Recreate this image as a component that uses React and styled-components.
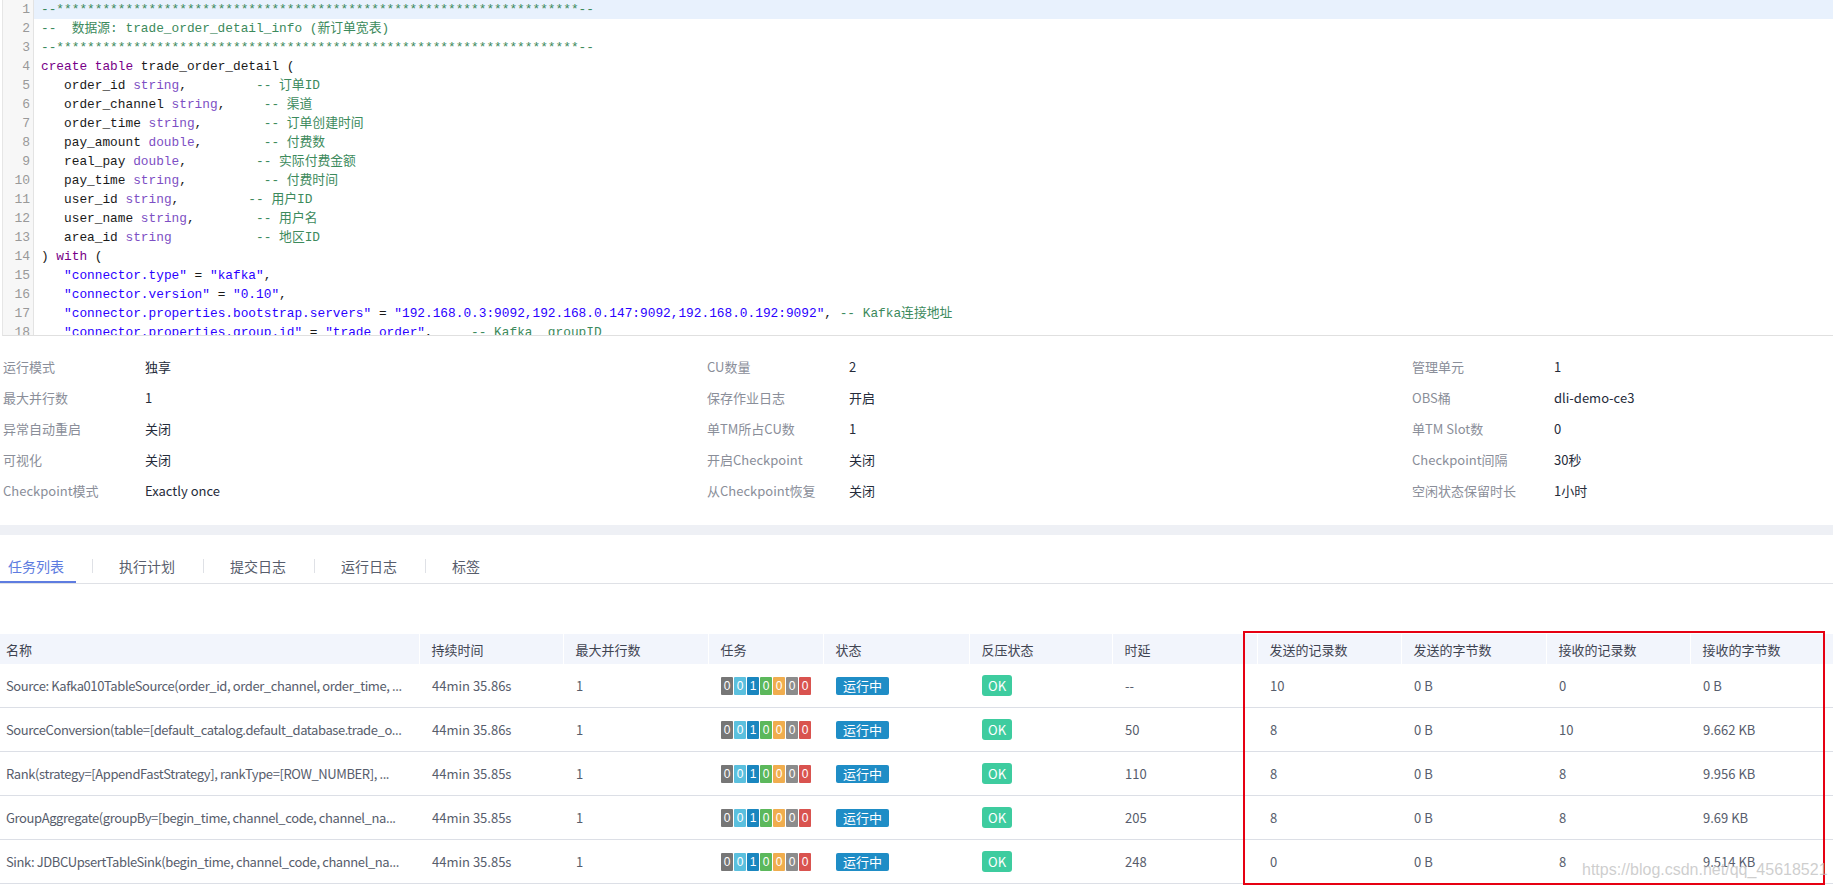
import React from "react"
import styled, { createGlobalStyle } from "styled-components"

const GlobalStyle = createGlobalStyle`
  body {
    margin: 0;
    background: #fff;
    font-family: "Noto Sans CJK SC", "Liberation Sans", sans-serif;
    overflow: hidden;
  }
`

const Page = styled.div`
  position: relative;
  width: 1833px;
  height: 888px;
  overflow: hidden;
`

/* ---------- code editor ---------- */

const Editor = styled.div`
  display: flex;
  height: 335px;
  margin-left: 2px;
  border-left: 1px solid #e6e6e6;
  border-bottom: 1px solid #e0e0e0;
  overflow: hidden;
  font-family: "Liberation Mono", "Noto Sans CJK SC", monospace;
  font-size: 12.8px;
`

const Gutter = styled.div`
  width: 30px;
  flex-shrink: 0;
  background: #f7f7f7;
  border-right: 1px solid #e3e3e3;
`

const LineNo = styled.div`
  height: 19px;
  line-height: 19px;
  padding-right: 3px;
  text-align: right;
  color: #999;
  font-size: 13px;
`

const CodeArea = styled.div`
  flex: 1;
`

const CodeLine = styled.div`
  height: 19px;
  line-height: 19px;
  padding-left: 7px;
  white-space: pre;
  color: #1a1a1a;
  background: ${({ $active }) => ($active ? "#e8f1fd" : "transparent")};
`

const tokenColors = {
  k: "#770088",
  y: "#7d4fc4",
  s: "#2a00ff",
  c: "#3c8a5c",
  p: "#1a1a1a",
}

const Tok = styled.span`
  color: ${({ $t }) => tokenColors[$t]};
`

const stars = "--" + "*".repeat(68) + "--"

const code = [
  [["c", stars]],
  [["c", "--  数据源: trade_order_detail_info (新订单宽表)"]],
  [["c", stars]],
  [["k", "create"], ["p", " "], ["k", "table"], ["p", " trade_order_detail ("]],
  [["p", "   order_id "], ["y", "string"], ["p", ",         "], ["c", "-- 订单ID"]],
  [["p", "   order_channel "], ["y", "string"], ["p", ",     "], ["c", "-- 渠道"]],
  [["p", "   order_time "], ["y", "string"], ["p", ",        "], ["c", "-- 订单创建时间"]],
  [["p", "   pay_amount "], ["y", "double"], ["p", ",        "], ["c", "-- 付费数"]],
  [["p", "   real_pay "], ["y", "double"], ["p", ",         "], ["c", "-- 实际付费金额"]],
  [["p", "   pay_time "], ["y", "string"], ["p", ",          "], ["c", "-- 付费时间"]],
  [["p", "   user_id "], ["y", "string"], ["p", ",         "], ["c", "-- 用户ID"]],
  [["p", "   user_name "], ["y", "string"], ["p", ",        "], ["c", "-- 用户名"]],
  [["p", "   area_id "], ["y", "string"], ["p", "           "], ["c", "-- 地区ID"]],
  [["p", ") "], ["k", "with"], ["p", " ("]],
  [["p", "   "], ["s", '"connector.type"'], ["p", " = "], ["s", '"kafka"'], ["p", ","]],
  [["p", "   "], ["s", '"connector.version"'], ["p", " = "], ["s", '"0.10"'], ["p", ","]],
  [
    ["p", "   "],
    ["s", '"connector.properties.bootstrap.servers"'],
    ["p", " = "],
    ["s", '"192.168.0.3:9092,192.168.0.147:9092,192.168.0.192:9092"'],
    ["p", ", "],
    ["c", "-- Kafka连接地址"],
  ],
  [
    ["p", "   "],
    ["s", '"connector.properties.group.id"'],
    ["p", " = "],
    ["s", '"trade_order"'],
    ["p", ",     "],
    ["c", "-- Kafka  groupID"],
  ],
]

/* ---------- job properties ---------- */

const PropGrid = styled.div`
  display: grid;
  grid-template-columns: 704px 705px 1fr;
  padding: 15px 0 0 3px;
`

const PropItem = styled.div`
  display: flex;
  height: 31px;
  line-height: 31px;
  font-size: 13px;
  white-space: nowrap;
`

const PropLabel = styled.span`
  width: 142px;
  color: #8a8e99;
`

const PropValue = styled.span`
  color: #252b3a;
`

const props = [
  ["运行模式", "独享"],
  ["CU数量", "2"],
  ["管理单元", "1"],
  ["最大并行数", "1"],
  ["保存作业日志", "开启"],
  ["OBS桶", "dli-demo-ce3"],
  ["异常自动重启", "关闭"],
  ["单TM所占CU数", "1"],
  ["单TM Slot数", "0"],
  ["可视化", "关闭"],
  ["开启Checkpoint", "关闭"],
  ["Checkpoint间隔", "30秒"],
  ["Checkpoint模式", "Exactly once"],
  ["从Checkpoint恢复", "关闭"],
  ["空闲状态保留时长", "1小时"],
]

const Band = styled.div`
  height: 10px;
  margin-top: 19px;
  background: #eef0f5;
`

/* ---------- tabs ---------- */

const TabBar = styled.div`
  display: flex;
  align-items: center;
  height: 34px;
  margin-top: 14px;
  border-bottom: 1px solid #dfe1e6;
`

const Tab = styled.div`
  height: 100%;
  display: flex;
  align-items: center;
  padding: 0 12px 0 8px;
  font-size: 14px;
  color: ${({ $active }) => ($active ? "#5e7ce0" : "#575d6c")};
  box-shadow: ${({ $active }) => ($active ? "inset 0 -2px 0 #5e7ce0" : "none")};
`

const TabSep = styled.span`
  width: 1px;
  height: 14px;
  margin: 0 18px 0 16px;
  background: #dfe1e6;
`

const tabs = ["任务列表", "执行计划", "提交日志", "运行日志", "标签"]

/* ---------- task table ---------- */

const Table = styled.table`
  margin-top: 50px;
  width: 1833px;
  table-layout: fixed;
  border-collapse: collapse;
  font-size: 13px;
`

const Th = styled.th`
  height: 30px;
  padding: 0 0 0 ${({ $first }) => ($first ? "6px" : "12px")};
  text-align: left;
  font-weight: 400;
  color: #3f4452;
  background: #f2f5fc;
  border-left: ${({ $first }) => ($first ? "none" : "1px solid #fff")};
  white-space: nowrap;
`

const Td = styled.td`
  height: 43px;
  padding: 0 8px 0 13px;
  color: #575d6c;
  border-bottom: 1px solid #dcdfe6;
  white-space: nowrap;
  overflow: hidden;
  text-overflow: ellipsis;
`

const NameTd = styled(Td)`
  padding: 0 4px 0 6px;
  letter-spacing: -0.4px;
`

const TaskCounts = styled.div`
  display: flex;
  gap: 1px;
`

const TaskBox = styled.span`
  width: 12px;
  height: 18px;
  line-height: 18px;
  border-radius: 1px;
  text-align: center;
  font-family: "Liberation Sans", sans-serif;
  font-size: 12px;
  color: #fff;
  background: ${({ $bg }) => $bg};
`

const RunBadge = styled.span`
  display: inline-block;
  height: 18px;
  line-height: 18px;
  padding: 0 7px;
  border-radius: 2px;
  color: #fff;
  background: #1f8dc6;
`

const OkBadge = styled.span`
  display: inline-block;
  height: 21px;
  line-height: 21px;
  padding: 0 6px;
  border-radius: 3px;
  color: #fff;
  background: #3ecc9f;
`

const taskColors = ["#767676", "#5bc0de", "#1a86bf", "#5cb85c", "#f0ad4e", "#8c8c8c", "#d9534f"]
const taskCounts = [0, 0, 1, 0, 0, 0, 0]

const colWidths = [419, 144, 145, 115, 146, 143, 145, 144, 145, 144, 143]
const headers = [
  "名称",
  "持续时间",
  "最大并行数",
  "任务",
  "状态",
  "反压状态",
  "时延",
  "发送的记录数",
  "发送的字节数",
  "接收的记录数",
  "接收的字节数",
]

const rows = [
  {
    name: "Source: Kafka010TableSource(order_id, order_channel, order_time, ...",
    dur: "44min 35.86s",
    lat: "--",
    sent: "10",
    sentBytes: "0 B",
    recv: "0",
    recvBytes: "0 B",
  },
  {
    name: "SourceConversion(table=[default_catalog.default_database.trade_o...",
    dur: "44min 35.86s",
    lat: "50",
    sent: "8",
    sentBytes: "0 B",
    recv: "10",
    recvBytes: "9.662 KB",
  },
  {
    name: "Rank(strategy=[AppendFastStrategy], rankType=[ROW_NUMBER], ...",
    dur: "44min 35.85s",
    lat: "110",
    sent: "8",
    sentBytes: "0 B",
    recv: "8",
    recvBytes: "9.956 KB",
  },
  {
    name: "GroupAggregate(groupBy=[begin_time, channel_code, channel_na...",
    dur: "44min 35.85s",
    lat: "205",
    sent: "8",
    sentBytes: "0 B",
    recv: "8",
    recvBytes: "9.69 KB",
  },
  {
    name: "Sink: JDBCUpsertTableSink(begin_time, channel_code, channel_na...",
    dur: "44min 35.85s",
    lat: "248",
    sent: "0",
    sentBytes: "0 B",
    recv: "8",
    recvBytes: "9.514 KB",
  },
]

/* ---------- overlays ---------- */

const RedFrame = styled.div`
  position: absolute;
  left: 1243px;
  top: 631px;
  width: 578px;
  height: 250px;
  border: 2px solid #e60012;
  pointer-events: none;
`

const Watermark = styled.div`
  position: absolute;
  left: 1582px;
  top: 861px;
  font-family: "Liberation Sans", sans-serif;
  font-size: 16px;
  color: rgba(190, 190, 190, 0.75);
  white-space: nowrap;
  pointer-events: none;
`

const App = () => (
  <Page>
    <GlobalStyle />
    <Editor>
      <Gutter>
        {code.map((_, i) => (
          <LineNo key={i}>{i + 1}</LineNo>
        ))}
      </Gutter>
      <CodeArea>
        {code.map((segs, i) => (
          <CodeLine key={i} $active={i === 0}>
            {segs.map(([t, s], j) => (
              <Tok key={j} $t={t}>
                {s}
              </Tok>
            ))}
          </CodeLine>
        ))}
      </CodeArea>
    </Editor>

    <PropGrid>
      {props.map(([label, value]) => (
        <PropItem key={label}>
          <PropLabel>{label}</PropLabel>
          <PropValue>{value}</PropValue>
        </PropItem>
      ))}
    </PropGrid>

    <Band />

    <TabBar>
      {tabs.map((t, i) => (
        <React.Fragment key={t}>
          {i > 0 && <TabSep />}
          <Tab $active={i === 0}>{t}</Tab>
        </React.Fragment>
      ))}
    </TabBar>

    <Table>
      <colgroup>
        {colWidths.map((w, i) => (
          <col key={i} style={{ width: w }} />
        ))}
      </colgroup>
      <thead>
        <tr>
          {headers.map((h, i) => (
            <Th key={h} $first={i === 0}>
              {h}
            </Th>
          ))}
        </tr>
      </thead>
      <tbody>
        {rows.map((r) => (
          <tr key={r.name}>
            <NameTd>{r.name}</NameTd>
            <Td>{r.dur}</Td>
            <Td>1</Td>
            <Td>
              <TaskCounts>
                {taskCounts.map((n, i) => (
                  <TaskBox key={i} $bg={taskColors[i]}>
                    {n}
                  </TaskBox>
                ))}
              </TaskCounts>
            </Td>
            <Td>
              <RunBadge>运行中</RunBadge>
            </Td>
            <Td>
              <OkBadge>OK</OkBadge>
            </Td>
            <Td>{r.lat}</Td>
            <Td>{r.sent}</Td>
            <Td>{r.sentBytes}</Td>
            <Td>{r.recv}</Td>
            <Td>{r.recvBytes}</Td>
          </tr>
        ))}
      </tbody>
    </Table>

    <RedFrame />
    <Watermark>https://blog.csdn.net/qq_45618521</Watermark>
  </Page>
)

export default App
